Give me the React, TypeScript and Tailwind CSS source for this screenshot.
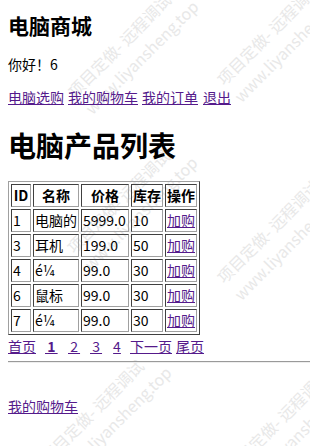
import React from "react";

const rows = [
  ["1", "电脑的", "5999.0", "10"],
  ["3", "耳机", "199.0", "50"],
  ["4", "é¼", "99.0", "30"],
  ["6", "鼠标", "99.0", "30"],
  ["7", "é¼", "99.0", "30"],
];

function Mark({ cls }: { cls: string }) {
  return (
    <div
      className={
        "absolute origin-top-left -rotate-45 whitespace-nowrap text-[16px] leading-[24px] text-[#e8e8e8] " +
        cls
      }
    >
      <div>项目定做- 远程调试</div>
      <div>www.liyansheng.top</div>
    </div>
  );
}

const td =
  "border border-t-[#404040] border-l-[#404040] border-r-[#a0a0a0] border-b-[#a0a0a0] p-[1px] leading-[19px] text-left align-middle";
const th =
  "border border-t-[#404040] border-l-[#404040] border-r-[#a0a0a0] border-b-[#a0a0a0] p-[1px] leading-[19px] text-center font-bold align-middle";
const link = "text-[#551a8b] underline";

export default function App() {
  return (
    <div className="relative min-h-[446px] overflow-hidden bg-white text-black font-['Noto_Sans_CJK_SC',sans-serif] text-[14px]">
      <div className="pointer-events-none absolute inset-0">
        <Mark cls="left-[62px] top-[85px]" />
        <Mark cls="left-[211px] top-[73px]" />
        <Mark cls="left-[61px] top-[241px]" />
        <Mark cls="left-[211px] top-[271px]" />
        <Mark cls="left-[35px] top-[451px]" />
        <Mark cls="left-[220px] top-[461px]" />
      </div>

      <div className="relative px-2">
        <h2 className="pt-[11px] text-[21px] font-bold leading-[28px]">电脑商城</h2>
        <p className="mt-[16px] leading-[18px]">你好！6</p>
        <div className="mt-[15px] flex leading-[18px]">
          <a className={link}>电脑选购</a>
          <a className={link + " ml-[4px]"}>我的购物车</a>
          <a className={link + " ml-[4px]"}>我的订单</a>
          <a className={link + " ml-[5px]"}>退出</a>
        </div>
        <h1 className="mt-[21px] text-[28px] font-bold leading-[36px]">电脑产品列表</h1>

        <table className="mt-[18px] border-separate border-spacing-[2px] border border-t-[#a0a0a0] border-l-[#a0a0a0] border-r-[#404040] border-b-[#404040]">
          <thead>
            <tr>
              <th className={th + " w-[20px]"}>ID</th>
              <th className={th + " w-[46px]"}>名称</th>
              <th className={th + " w-[48px]"}>价格</th>
              <th className={th + " w-[32px]"}>库存</th>
              <th className={th + " w-[32px]"}>操作</th>
            </tr>
          </thead>
          <tbody>
            {rows.map((r) => (
              <tr key={r[0]}>
                <td className={td}>{r[0]}</td>
                <td className={td + " whitespace-nowrap"}>{r[1]}</td>
                <td className={td}>{r[2]}</td>
                <td className={td}>{r[3]}</td>
                <td className={td}>
                  <a className={link}>加购</a>
                </td>
              </tr>
            ))}
          </tbody>
        </table>

        <div className="mt-[2px] flex leading-[18px]">
          <a className={link + " w-[28px]"}>首页</a>
          <a className={link + " ml-[9px] w-[12px] text-center font-bold [word-spacing:-1px]"}>{"\u00a01\u00a0"}</a>
          <a className={link + " ml-[11px] w-[12px] text-center [word-spacing:-1px]"}>{"\u00a02\u00a0"}</a>
          <a className={link + " ml-[10px] w-[12px] text-center [word-spacing:-1px]"}>{"\u00a03\u00a0"}</a>
          <a className={link + " ml-[11px] w-[8px] text-center"}>4</a>
          <a className={link + " ml-[9px]"}>下一页</a>
          <a className={link + " ml-[4px]"}>尾页</a>
        </div>

        <div className="-mr-2 mt-[6px] h-[2px] border-t border-b border-t-[#9a9a9a] border-b-[#eeeeee]" />

        <div className="mt-[34px] leading-[18px]">
          <a className={link}>我的购物车</a>
        </div>
      </div>
    </div>
  );
}
